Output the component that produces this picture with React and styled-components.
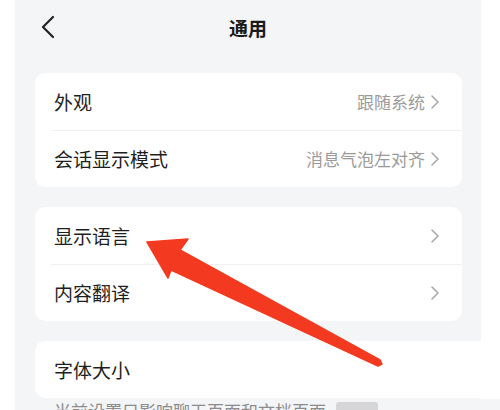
import styled, { createGlobalStyle } from "styled-components";

const GlobalStyle = createGlobalStyle`
  html, body {
    margin: 0;
    padding: 0;
    background: #ffffff;
    overflow: hidden;
  }
  body {
    font-family: "Noto Sans CJK SC", "Noto Sans", sans-serif;
  }
`;

const groups = [
  [
    { label: "外观", value: "跟随系统" },
    { label: "会话显示模式", value: "消息气泡左对齐" },
  ],
  [
    { label: "显示语言", value: "" },
    { label: "内容翻译", value: "" },
  ],
];

function Chevron() {
  return (
    <svg width="10" height="16" viewBox="0 0 10 16">
      <path
        d="M2 2 L8 8 L2 14"
        fill="none"
        stroke="#a6a6a6"
        strokeWidth="1.5"
        strokeLinecap="round"
        strokeLinejoin="round"
      />
    </svg>
  );
}

function App() {
  return (
    <Screen>
      <GlobalStyle />
      <Panel>
        <Header>
          <BackButton>
            <svg width="16" height="24" viewBox="0 0 16 24">
              <path
                d="M13 2 L3 12 L13 22"
                fill="none"
                stroke="#222"
                strokeWidth="2.2"
                strokeLinecap="round"
                strokeLinejoin="round"
              />
            </svg>
          </BackButton>
          <Title>通用</Title>
        </Header>
        <List>
          {groups.map((rows, i) => (
            <Card key={i}>
              {rows.map((row, j) => (
                <Row key={row.label} divided={j > 0}>
                  <Label>{row.label}</Label>
                  <Trail>
                    {row.value && <Value>{row.value}</Value>}
                    <Chevron />
                  </Trail>
                </Row>
              ))}
            </Card>
          ))}
          <Card wide>
            <Row>
              <Label>字体大小</Label>
            </Row>
          </Card>
          <Note>
            当前设置只影响聊天页面和文档页面<NoteTag />
          </Note>
        </List>
      </Panel>
      <Arrow viewBox="0 0 500 410">
        <polygon
          points="147,242 188,239 180,250 380,360 382,364 378,366 171,270 168,278"
          fill="#f33a20"
          stroke="#f33a20"
          strokeWidth="1.5"
          strokeLinejoin="round"
        />
      </Arrow>
    </Screen>
  );
}

const Screen = styled.div`
  position: relative;
  width: 500px;
  height: 410px;
  background: #ffffff;
  overflow: hidden;
`;

const Panel = styled.div`
  margin-left: 15px;
  width: 466px;
  height: 410px;
  background: #f4f5f7;
  display: flex;
  flex-direction: column;
`;

const Header = styled.div`
  position: relative;
  flex-shrink: 0;
  height: 54px;
  display: flex;
  align-items: center;
  justify-content: center;
`;

const BackButton = styled.div`
  position: absolute;
  left: 25px;
  top: 15px;
  display: flex;
`;

const Title = styled.div`
  font-size: 19px;
  font-weight: 700;
  color: #1a1a1a;
`;

const List = styled.div`
  flex-shrink: 0;
  display: flex;
  flex-direction: column;
  gap: 20px;
  padding: 19px 19px 0 20px;
`;

const Card = styled.div`
  flex-shrink: 0;
  background: #ffffff;
  border-radius: ${(p) => (p.wide ? "10px 0 0 10px" : "10px")};
  margin-right: ${(p) => (p.wide ? "-38px" : "0")};
  overflow: hidden;
`;

const Row = styled.div`
  position: relative;
  height: 57px;
  display: flex;
  align-items: center;
  justify-content: space-between;
  padding: 0 22px 0 19px;

  &::before {
    content: "";
    display: ${(p) => (p.divided ? "block" : "none")};
    position: absolute;
    top: 0;
    left: 16px;
    right: 0;
    height: 1px;
    background: #f0f0f2;
  }
`;

const Label = styled.span`
  font-size: 19px;
  color: #1f1f1f;
`;

const Trail = styled.div`
  display: flex;
  align-items: center;
  gap: 5px;
`;

const Value = styled.span`
  font-size: 17px;
  color: #9b9b9b;
`;

const Note = styled.div`
  margin: -19px -38px 0 0;
  padding: 1px 0 20px 19px;
  background: #f4f5f7;
  font-size: 17px;
  line-height: 22px;
  color: #8c8c8c;
  display: flex;
  align-items: center;
  gap: 10px;
  white-space: nowrap;
`;

const NoteTag = styled.span`
  display: inline-block;
  width: 42px;
  height: 18px;
  border-radius: 3px;
  background: #d6d6d8;
`;

const Arrow = styled.svg`
  position: absolute;
  left: 0;
  top: 0;
  width: 500px;
  height: 410px;
  pointer-events: none;
`;

export default App;
